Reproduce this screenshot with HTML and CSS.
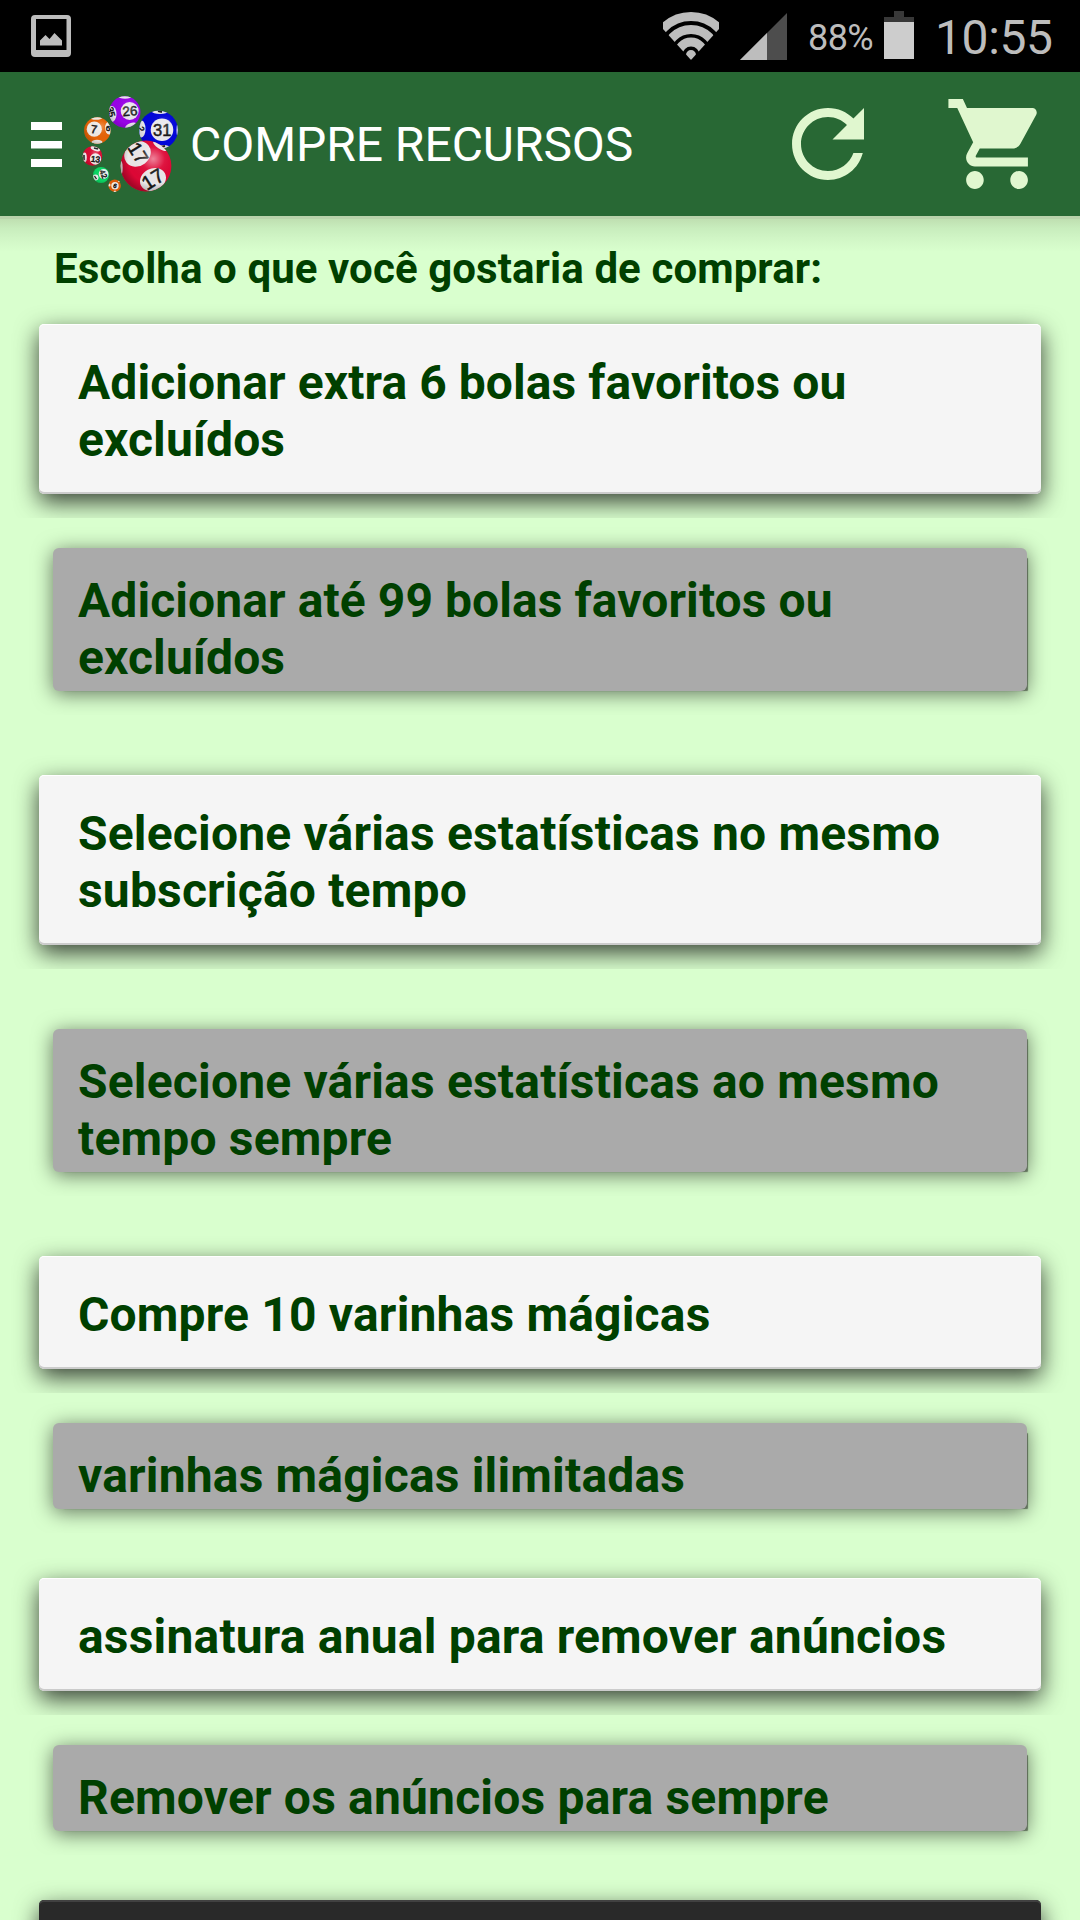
FILE: index.html
```html
<!DOCTYPE html>
<html lang="pt">
<head>
<meta charset="utf-8">
<title>Compre recursos</title>
<link rel="stylesheet" href="styles.css">
</head>
<body>
<div class="status-bar">
  <svg class="picture-icon" viewBox="0 0 40 42"><path fill="#bdbdbd" fill-rule="evenodd" d="M4 0H36Q40 0 40 4V38Q40 42 36 42H4Q0 42 0 38V4Q0 0 4 0ZM5 4V35H35.500V4ZM9 30.500V25.500L14.500 20L18.500 24L23.500 18L31 25.500V30.500Z"/></svg>
  <svg class="wifi-icon" viewBox="0 0 56 48">
    <defs><clipPath id="fan"><path d="M28 48L-4.500 12V-5H60.500V12Z"/></clipPath></defs>
    <g clip-path="url(#fan)" fill="none" stroke="#bdbdbd" stroke-width="9">
      <circle cx="28" cy="43" r="38.500"/><circle cx="28" cy="43" r="25.500"/><circle cx="28" cy="43" r="13"/><circle cx="28" cy="43" r="2.500" stroke-width="5"/>
    </g>
  </svg>
  <svg class="signal-icon" viewBox="0 0 47 47"><path fill="#4d4d4d" d="M47 0V47H0Z"/><path fill="#bdbdbd" d="M27 20V47H0Z"/></svg>
  <span class="battery-level">88%</span>
  <svg class="battery-icon" viewBox="0 0 30 48"><path fill="#383838" d="M10 0H20V6H30V11H0V6H10Z"/><path fill="#cdcdcd" d="M0 11H30V48H0Z"/></svg>
  <span class="clock">10:55</span>
</div>

<header class="app-bar">
  <svg class="menu-icon" viewBox="0 0 31 45"><path fill="#fff" d="M0 0H31V8H0ZM0 19H31V26.500H0ZM0 37H31V45H0Z"/></svg>
  <svg class="logo" viewBox="80 94 100 100">
    <defs>
      <radialGradient id="shine" cx=".64" cy=".36" r=".66"><stop offset="0" stop-color="#fff" stop-opacity=".5"/><stop offset=".35" stop-color="#fff" stop-opacity=".06"/><stop offset=".75" stop-color="#000" stop-opacity="0"/><stop offset="1" stop-color="#000" stop-opacity=".25"/></radialGradient>
      <clipPath id="c1"><circle cx="124.800" cy="112" r="15.700"/></clipPath>
      <clipPath id="c2"><circle cx="158.500" cy="130" r="19.300"/></clipPath>
      <clipPath id="c3"><circle cx="97.300" cy="130.500" r="13.200"/></clipPath>
      <clipPath id="c4"><circle cx="146" cy="166" r="25.400"/></clipPath>
      <clipPath id="c5"><circle cx="92.500" cy="156" r="9.800"/></clipPath>
      <clipPath id="c6"><circle cx="101" cy="175" r="8"/></clipPath>
      <clipPath id="c7"><circle cx="114.700" cy="185.700" r="6.200"/></clipPath>
    </defs>
    <g clip-path="url(#c1)">
      <path fill="#9803e6" d="M108 95h34v34h-34z"/>
      <g fill="#e8e4ec"><circle cx="129.700" cy="111" r="9"/><ellipse cx="111.500" cy="114" rx="5" ry="8"/><ellipse cx="125" cy="96.500" rx="7" ry="2.200"/><ellipse cx="131" cy="126" rx="6" ry="3" transform="rotate(-20 131 126)"/></g>
      <text class="ball-number" x="130" y="115.800" font-size="13.500" transform="rotate(-4 130 111)">26</text>
      <text class="ball-number" x="111" y="115" font-size="9" transform="rotate(75 111 112)">35</text>
      <circle cx="124.800" cy="112" r="15.700" fill="url(#shine)" opacity=".5"/>
    </g>
    <g clip-path="url(#c2)">
      <path fill="#0206d8" d="M138 110h42v42h-42z"/>
      <g fill="#e8e8ec"><circle cx="162" cy="129.700" r="11.300"/><ellipse cx="141.500" cy="129" rx="4" ry="8.500"/><ellipse cx="160" cy="111.500" rx="8" ry="2.500"/><ellipse cx="163" cy="148" rx="8" ry="3"/><ellipse cx="178" cy="130" rx="1.500" ry="7"/></g>
      <text class="ball-number" x="162.200" y="135.500" font-size="16.500">31</text>
      <text class="ball-number" x="141" y="132" font-size="9" transform="rotate(80 141 129)">2</text>
      <path stroke="#222" stroke-width="2" d="M158 111l4 1M160 147l5-1"/>
      <circle cx="158.500" cy="130" r="19.300" fill="url(#shine)" opacity=".4"/>
    </g>
    <g clip-path="url(#c3)">
      <path fill="#e56307" d="M83 116h29v29H83z"/>
      <g fill="#eee9e4"><circle cx="94.300" cy="129.200" r="7.600"/><ellipse cx="109" cy="128" rx="4" ry="6.500"/><ellipse cx="96" cy="118" rx="6" ry="1.700"/><ellipse cx="97" cy="142" rx="5.500" ry="2.200"/></g>
      <text class="ball-number" x="94" y="133.200" font-size="11.500" transform="rotate(8 94 129)">7</text>
      <text class="ball-number" x="108" y="131" font-size="8">6</text>
      <circle cx="97.300" cy="130.500" r="13.200" fill="url(#shine)" opacity=".6"/>
    </g>
    <g clip-path="url(#c4)">
      <path fill="#dd0735" d="M120 140h52v52h-52z"/>
      <g fill="#eae7e8"><ellipse cx="137.500" cy="154" rx="14" ry="12" transform="rotate(-38 137.500 154)"/><ellipse cx="153" cy="179.500" rx="13.500" ry="11" transform="rotate(-28 153 179.500)"/><ellipse cx="160" cy="146" rx="8" ry="2.800" transform="rotate(34 160 146)"/><ellipse cx="121" cy="168" rx="1.700" ry="7"/></g>
      <text class="ball-number" x="138" y="159.500" font-size="19" transform="rotate(58 138 153)">17</text>
      <text class="ball-number" x="153" y="186" font-size="20" transform="rotate(-32 153 179.500)">17</text>
      <circle cx="146" cy="166" r="25.400" fill="url(#shine)"/>
    </g>
    <g clip-path="url(#c5)">
      <path fill="#d80b32" d="M82 146h21v21H82z"/>
      <g fill="#ece8e8"><circle cx="95.500" cy="159" r="5.700"/><ellipse cx="84.300" cy="157.500" rx="2.500" ry="5"/><ellipse cx="95.500" cy="148.500" rx="5" ry="2.500" transform="rotate(20 95.500 148.500)"/></g>
      <text class="ball-number" x="95.500" y="162" font-size="8.500" transform="rotate(8 95 159)">13</text>
      <path stroke="#222" stroke-width="1.500" d="M84 155v5M94 148l4 1"/>
      <circle cx="92.500" cy="156" r="9.800" fill="url(#shine)" opacity=".6"/>
    </g>
    <g clip-path="url(#c6)">
      <path fill="#0bd463" d="M92 166h18v18H92z"/>
      <g fill="#e6eee9"><circle cx="103.600" cy="174" r="4.900"/><circle cx="95.500" cy="177.500" r="3"/></g>
      <text class="ball-number" x="103.500" y="176.700" font-size="7.500" transform="rotate(65 103.500 174)">42</text>
      <path stroke="#222" stroke-width="1.300" d="M94.500 176l2 3"/>
      <circle cx="101" cy="175" r="8" fill="url(#shine)" opacity=".5"/>
    </g>
    <g clip-path="url(#c7)">
      <path fill="#dd5c0b" d="M108 179h14v14h-14z"/>
      <g fill="#eee9e4"><circle cx="115" cy="185.800" r="3.700"/><circle cx="109" cy="185" r="1.500"/><circle cx="119" cy="181" r="1"/><circle cx="115" cy="192" r="1.500"/></g>
      <text class="ball-number" x="115" y="188" font-size="6" transform="rotate(20 115 186)">6</text>
    </g>
  </svg>
  <h1 class="title">COMPRE RECURSOS</h1>
  <svg class="refresh-icon" viewBox="0 0 24 24"><path d="M17.650 6.350C16.200 4.900 14.210 4 12 4c-4.420 0-7.990 3.580-7.990 8s3.570 8 7.990 8c3.730 0 6.840-2.550 7.730-6h-2.080c-.82 2.330-3.040 4-5.650 4-3.310 0-6-2.690-6-6s2.690-6 6-6c1.660 0 3.140.69 4.220 1.780L13 11h7V4l-2.350 2.350z"/></svg>
  <svg class="cart-icon" viewBox="0 0 24 24" preserveAspectRatio="none"><path d="M7 18c-1.100 0-1.990.9-1.990 2S5.900 22 7 22s2-.9 2-2-.9-2-2-2zM1 2v2h2l3.600 7.590-1.350 2.450c-.16.28-.25.61-.25.96 0 1.100.9 2 2 2h12v-2H7.420c-.14 0-.25-.11-.25-.25l.03-.12.900-1.630h7.450c.75 0 1.410-.41 1.750-1.030l3.580-6.490c.08-.14.120-.31.120-.48 0-.55-.45-1-1-1H5.210l-.94-2H1zm16 16c-1.100 0-1.990.9-1.990 2s.89 2 1.990 2 2-.9 2-2-.9-2-2-2z"/></svg>
</header>

<main class="content">
  <p class="prompt">Escolha o que você gostaria de comprar:</p>
  <button class="card tight">Adicionar extra 6 bolas favoritos ou excluídos</button>
  <button class="card card-off tight">Adicionar até 99 bolas favoritos ou excluídos</button>
  <button class="card spaced">Selecione várias estatísticas no mesmo subscrição tempo</button>
  <button class="card card-off spaced">Selecione várias estatísticas ao mesmo tempo sempre</button>
  <button class="card spaced">Compre 10 varinhas mágicas</button>
  <button class="card card-off">varinhas mágicas ilimitadas</button>
  <button class="card middle">assinatura anual para remover anúncios</button>
  <button class="card card-off">Remover os anúncios para sempre</button>
  <div class="card card-dark middle"></div>
</main>
</body>
</html>
```
FILE: styles.css
```css
* { box-sizing: border-box; }

body {
  margin: 0;
  width: 1080px;
  height: 1920px;
  overflow: hidden;
  background: #d9ffce;
  font-family: Roboto, "Liberation Sans", sans-serif;
}

svg { display: block; flex: none; }

/* System status bar */
.status-bar {
  display: flex;
  align-items: flex-start;
  height: 72px;
  padding: 0 24px 0 31px;
  background: #000;
  color: #bdbdbd;
}
.picture-icon { width: 40px; height: 42px; margin-top: 15px; }
.wifi-icon { width: 56px; height: 48px; margin: 12px 0 0 592px; }
.signal-icon { width: 47px; height: 47px; margin: 13px 0 0 21px; }
.battery-level { width: 75px; margin: 17px 0 0 21px; font-size: 36px; line-height: 42px; white-space: nowrap; letter-spacing: -.6px; }
.battery-icon { width: 30px; height: 48px; margin: 11px 0 0 1px; }
.battery-level, .clock { flex: none; }
.clock { margin: 10px 0 0 21px; font-size: 48px; line-height: 56px; white-space: nowrap; letter-spacing: -.4px; }

/* App bar */
.app-bar {
  display: flex;
  align-items: center;
  height: 144px;
  padding: 0 30.500px 0 31px;
  background: #286834;
}
.menu-icon { width: 31px; height: 45px; margin-top: 1px; }
.logo { width: 100px; height: 100px; margin-left: 18px; }
.ball-number { font-family: "Liberation Sans", sans-serif; fill: #151515; stroke: #151515; stroke-width: .5px; text-anchor: middle; }
.title { flex: 1; margin: 2px 0 0 10px; color: #fff; font-size: 48px; font-weight: 400; line-height: 56px; white-space: nowrap; letter-spacing: -.05px; }
.refresh-icon, .cart-icon { width: 108px; height: 108px; fill: #e0f7cf; }
.cart-icon { width: 106px; margin-left: 61.500px; }

/* Purchase list */
.content {
  display: flex;
  flex-direction: column;
  height: 1704px;
  padding: 0 39px;
  background: linear-gradient(#b9d2ab 0, #b9d2ab 3px, #bfdfb1 3px, #c8edbd 12px, #d1f6c6 23px, #d9ffce 36px);
}
.prompt {
  margin: 28px 0 30px 15px;
  color: #004000;
  font-size: 42px;
  font-weight: 700;
  line-height: 50px;
  white-space: nowrap;
  letter-spacing: .09px;
}
.card {
  flex: none;
  margin: 0;
  padding: 30px 39px 26px;
  border: 0;
  border-radius: 5px;
  background: #f5f5f5;
  color: #004000;
  font: 700 48px/57px Roboto, "Liberation Sans", sans-serif;
  letter-spacing: .18px;
  text-align: left;
  box-shadow: inset 0 1px #fff, inset 0 -2px #ccc, 0 8px 23px rgba(0, 0, 0, .75);
  clip-path: inset(-30px -30px -24px -30px);
}
.card-off {
  margin: 54px 14px 0;
  padding: 24px 25px 5px;
  border-radius: 6px;
  background: #aaa;
  box-shadow: 6px 5px 1px -5px rgba(0, 0, 0, .45), 0 3px 20px rgba(0, 0, 0, .54);
}
.tight { letter-spacing: .08px; }
.spaced { margin-top: 84px; }
.middle { margin-top: 69px; }
.card-dark {
  height: 113px;
  background: #292929;
  box-shadow: inset 0 2px #414141, 0 8px 23px rgba(0, 0, 0, .75);
}
```
